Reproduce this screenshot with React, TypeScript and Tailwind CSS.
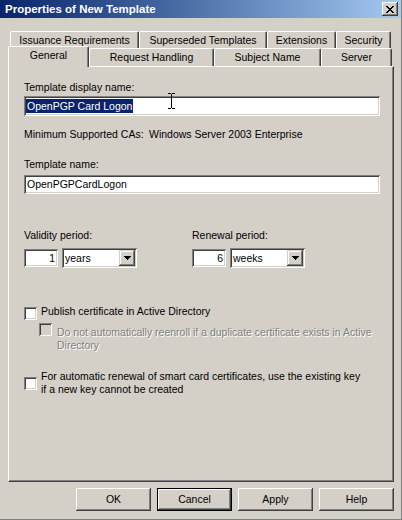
import React from "react";

const raised =
  "shadow-[inset_-1px_-1px_0_#404040,inset_1px_1px_0_#ffffff,inset_-2px_-2px_0_#808080,inset_2px_2px_0_#D4D0C8]";
const raisedCombo =
  "shadow-[inset_-1px_-1px_0_#404040,inset_1px_1px_0_#D4D0C8,inset_-2px_-2px_0_#808080,inset_2px_2px_0_#ffffff]";
const sunken =
  "shadow-[inset_1px_1px_0_#808080,inset_-1px_-1px_0_#ffffff,inset_2px_2px_0_#404040,inset_-2px_-2px_0_#D4D0C8]";

function Arrow() {
  return (
    <svg width="7" height="4" viewBox="0 0 7 4" shapeRendering="crispEdges">
      <path d="M0 0h7v1H0z M1 1h5v1H1z M2 2h3v1H2z M3 3h1v1H3z" fill="#000" />
    </svg>
  );
}

function Combo({ value }: { value: string }) {
  return (
    <div className={`w-[75px] h-[20px] bg-white ${sunken} flex items-center pl-[3px] pr-[2px] py-[2px]`}>
      <span className="flex-1">{value}</span>
      <div className={`w-[16px] h-[16px] bg-[#D4D0C8] ${raisedCombo} flex items-center justify-center`}>
        <Arrow />
      </div>
    </div>
  );
}

function Tab({ label, w, h = "h-[17px]" }: { label: string; w: string; h?: string }) {
  return (
    <div
      className={`${w} ${h} flex items-center justify-center border-l border-t border-white border-r border-r-[#404040] rounded-t-[2px] shadow-[inset_-1px_0_0_#808080]`}
    >
      {label}
    </div>
  );
}

function Button({ label, def = false }: { label: string; def?: boolean }) {
  return (
    <div
      className={`w-[75px] h-[23px] flex items-center justify-center bg-[#D4D0C8] ${
        def ? "border border-black" : ""
      } ${raised}`}
    >
      {label}
    </div>
  );
}

function Checkbox({ disabled = false, className = "" }: { disabled?: boolean; className?: string }) {
  return (
    <div
      className={`w-[13px] h-[13px] shrink-0 ${disabled ? "bg-[#D4D0C8]" : "bg-white"} ${sunken} ${className}`}
    />
  );
}

export default function App() {
  return (
    <div className="w-[402px] h-[520px] bg-[#D4D0C8] flex flex-col text-[10.5px] leading-[13px] text-black font-['Liberation_Sans',Arial,sans-serif] border-r border-b border-[#808080] overflow-hidden">
      {/* Title bar */}
      <div className="h-[18px] shrink-0 bg-linear-to-r from-[#0A246A] to-[#A6CAF0] flex items-center justify-between pl-[5px] pr-[3px]">
        <span className="text-white font-bold text-[11.5px]">Properties of New Template</span>
        <div className={`w-[16px] h-[14px] bg-[#D4D0C8] ${raised} flex items-center justify-center`}>
          <svg width="8" height="7" viewBox="0 0 8 7" shapeRendering="crispEdges">
            <path
              d="M0 0h2v1H0z M6 0h2v1H6z M1 1h2v1H1z M5 1h2v1H5z M2 2h4v1H2z M3 3h2v1H3z M2 4h4v1H2z M1 5h2v1H1z M5 5h2v1H5z M0 6h2v1H0z M6 6h2v1H6z"
              fill="#000"
            />
          </svg>
        </div>
      </div>

      {/* Tabs + panel */}
      <div className="mt-[13px] ml-[8px] flex flex-col">
        <div className="flex h-[17px] pl-[2px]">
          <Tab label="Issuance Requirements" w="w-[129px]" />
          <Tab label="Superseded Templates" w="w-[128px]" />
          <Tab label="Extensions" w="w-[69px]" />
          <Tab label="Security" w="w-[55px]" />
        </div>
        <div className="flex items-end h-[18px]">
          <div className="w-[81px] h-[21px] mb-[-1px] relative z-10 bg-[#D4D0C8] flex items-center justify-center pb-[4px] border-l border-t border-white border-r border-r-[#404040] rounded-t-[2px] shadow-[inset_-1px_0_0_#808080]">
            General
          </div>
          <Tab label="Request Handling" w="w-[125px]" h="h-[18px]" />
          <Tab label="Subject Name" w="w-[107px]" h="h-[18px]" />
          <Tab label="Server" w="w-[71px]" h="h-[18px]" />
        </div>

        <div className="w-[386px] h-[416px] border-l border-t border-white border-r border-b border-r-[#404040] border-b-[#404040] shadow-[inset_-1px_-1px_0_#808080] flex flex-col pl-[15px] pt-[14px]">
          <div>Template display name:</div>
          <div className={`mt-[2px] w-[356px] h-[20px] shrink-0 bg-white ${sunken} flex items-center pl-[2px] relative`}>
            <span className="inline-block bg-[#0A246A] text-white px-[1px] leading-[14px]">OpenPGP Card Logon</span>
            <svg
              className="absolute left-[144px] top-[-3px]"
              width="7"
              height="16"
              viewBox="0 0 7 16"
              shapeRendering="crispEdges"
            >
              <path d="M0 0h3v1H0z M4 0h3v1H4z M3 1h1v14H3z M0 15h3v1H0z M4 15h3v1H4z" fill="#000" />
            </svg>
          </div>

          <div className="mt-[12px] flex">
            <span className="w-[125px]">Minimum Supported CAs:</span>
            <span>Windows Server 2003 Enterprise</span>
          </div>

          <div className="mt-[17px]">Template name:</div>
          <div className={`mt-[4px] w-[356px] h-[19px] shrink-0 bg-white ${sunken} flex items-center pl-[3px]`}>
            OpenPGPCardLogon
          </div>

          <div className="mt-[35px] flex">
            <div className="w-[168px] flex flex-col">
              <div>Validity period:</div>
              <div className="mt-[6px] flex items-center gap-[4px]">
                <div className={`w-[34px] h-[18px] bg-white ${sunken} flex items-center justify-end pr-[3px]`}>1</div>
                <Combo value="years" />
              </div>
            </div>
            <div className="flex flex-col">
              <div>Renewal period:</div>
              <div className="mt-[6px] flex items-center gap-[4px]">
                <div className={`w-[34px] h-[18px] bg-white ${sunken} flex items-center justify-end pr-[3px]`}>6</div>
                <Combo value="weeks" />
              </div>
            </div>
          </div>

          <div className="mt-[37px] flex items-start">
            <Checkbox className="mt-[2px]" />
            <span className="ml-[4px]">Publish certificate in Active Directory</span>
          </div>

          <div className="mt-[3px] pl-[15px] flex items-start">
            <Checkbox disabled />
            <span className="ml-[5px] mt-[3px] text-[#808080] [text-shadow:1px_1px_0_#ffffff]">
              Do not automatically reenroll if a duplicate certificate exists in Active
              <br />
              Directory
            </span>
          </div>

          <div className="mt-[18px] flex items-center">
            <Checkbox />
            <span className="ml-[4px]">
              For automatic renewal of smart card certificates, use the existing key
              <br />
              if a new key cannot be created
            </span>
          </div>
        </div>
      </div>

      {/* Buttons */}
      <div className="mt-[6px] flex justify-end gap-[6px] pr-[7px]">
        <Button label="OK" />
        <Button label="Cancel" def />
        <Button label="Apply" />
        <Button label="Help" />
      </div>
    </div>
  );
}
